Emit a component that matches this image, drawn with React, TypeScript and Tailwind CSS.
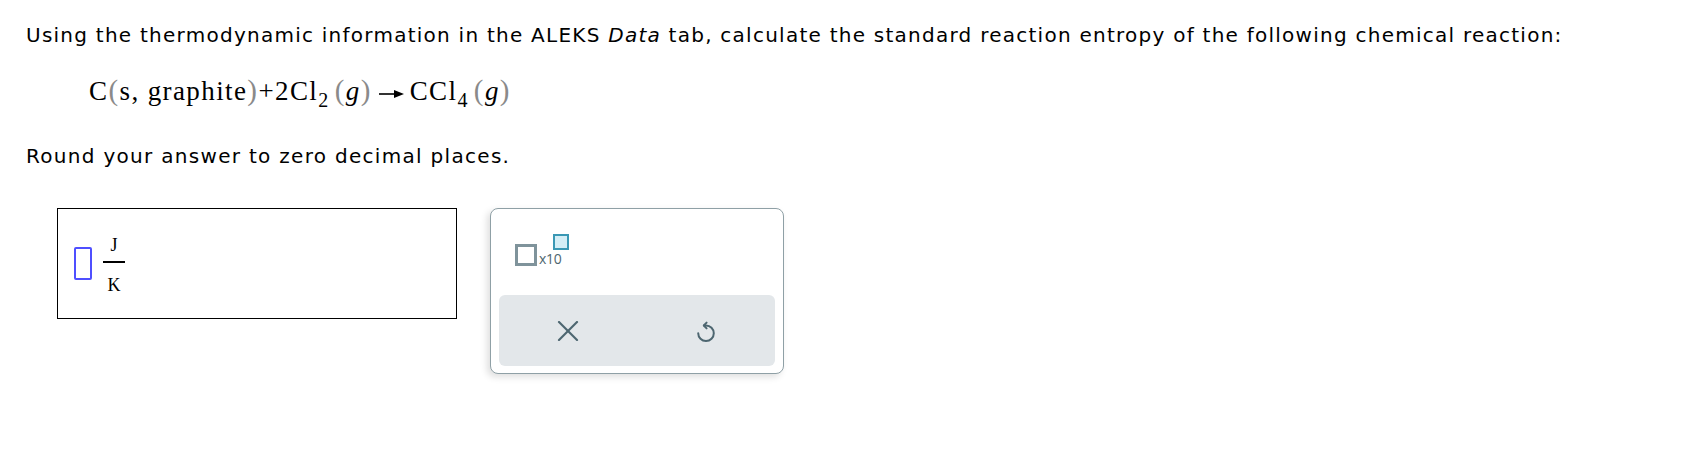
import React from "react";

const sans = { fontFamily: '"DejaVu Sans", Verdana, sans-serif' };
const serif = { fontFamily: '"Liberation Serif", "Times New Roman", serif' };

function Paren({ children }: { children: React.ReactNode }) {
  return <span className="text-[#8a8a8a] text-[29px]">{children}</span>;
}

function Sub({ children }: { children: React.ReactNode }) {
  return (
    <span className="relative top-[7px] text-[20px] leading-none">{children}</span>
  );
}

function UndoIcon() {
  return (
    <svg width="24" height="24" viewBox="0 0 24 24" fill="none" stroke="#4d6670" strokeWidth="2" strokeLinecap="round" strokeLinejoin="round">
      <path d="M10 5.5h2a7.8 7.8 0 1 1 -7.8 7.8" />
      <path d="M12.6 2.6 9.8 5.5l2.8 2.9" />
    </svg>
  );
}

function CloseIcon() {
  return (
    <svg width="22" height="20" viewBox="0 0 22 20" fill="none" stroke="#4d6670" strokeWidth="2.2" strokeLinecap="round">
      <path d="M2 1 20 19" />
      <path d="M20 1 2 19" />
    </svg>
  );
}

export default function App() {
  return (
    <div className="min-h-[454px] w-[1684px] bg-white pl-[26px] pt-[21px] text-black">
      {/* Question */}
      <p className="text-[20px] leading-[28px] tracking-[1.25px]" style={sans}>
        Using the thermodynamic information in the ALEKS <i>Data</i> tab, calculate the
        standard reaction entropy of the following chemical reaction:
      </p>

      {/* Equation */}
      <div className="mt-[23px] pl-[63px] text-[27px] leading-[36px] tracking-[1.4px] whitespace-nowrap" style={serif}>
        C<Paren>(</Paren>s, graphite<Paren>)</Paren>+2Cl<Sub>2</Sub>
        <span className="ml-[5px]" />
        <Paren>(</Paren><i>g</i><Paren>)</Paren>
        <svg className="mx-[6px] inline-block align-middle" width="26" height="10" viewBox="0 0 26 10">
          <path d="M1 5h17" stroke="#000" strokeWidth="1.6" />
          <path d="M26 5 16 1v8z" fill="#000" />
        </svg>
        CCl<Sub>4</Sub>
        <span className="ml-[5px]" />
        <Paren>(</Paren><i>g</i><Paren>)</Paren>
      </div>

      <p className="mt-[33px] text-[20px] leading-[28px] tracking-[1.3px]" style={sans}>
        Round your answer to zero decimal places.
      </p>

      {/* Answer area */}
      <div className="ml-[31px] mt-[38px] flex items-start gap-[33px]">
        <div className="flex h-[111px] w-[400px] items-start border border-black pl-[16px]">
          <div className="mt-[38px] h-[33px] w-[18px] rounded-[2px] border-2 border-[#4f4fff]" />
          <div className="ml-[11px] mt-[26px] flex flex-col items-center text-[18px]" style={serif}>
            <span className="leading-[20px]">J</span>
            <span className="mt-[6px] h-[1.5px] w-[22px] bg-black" />
            <span className="mt-[12px] leading-[20px]">K</span>
          </div>
        </div>

        <div className="flex h-[166px] w-[294px] flex-col rounded-[8px] border border-[#8fa0a6] bg-white shadow-[-3px_3px_7px_rgba(0,0,0,0.13)]">
          <div className="h-[86px] pl-[24px] pt-[26px]">
            <div className="flex items-end">
              <span className="mt-[9px] h-[22px] w-[22px] border-[3px] border-[#7f939b]" />
              <span className="relative ml-[2px] text-[14px] leading-[15px] tracking-[-0.3px] text-[#4d6670]" style={{ fontFamily: '"Open Sans", Inter, sans-serif' }}>
                x10
                <span className="absolute left-[14px] top-[-17px] h-[16px] w-[16px] border-2 border-[#3a98b4] bg-[#d4eef6]" />
              </span>
            </div>
          </div>
          <div className="mx-[8px] grid h-[71px] grid-cols-2 rounded-[6px] bg-[#e3e7ea]">
            <div className="flex items-center justify-center">
              <CloseIcon />
            </div>
            <div className="flex items-center justify-center pt-[2px]">
              <UndoIcon />
            </div>
          </div>
        </div>
      </div>
    </div>
  );
}
